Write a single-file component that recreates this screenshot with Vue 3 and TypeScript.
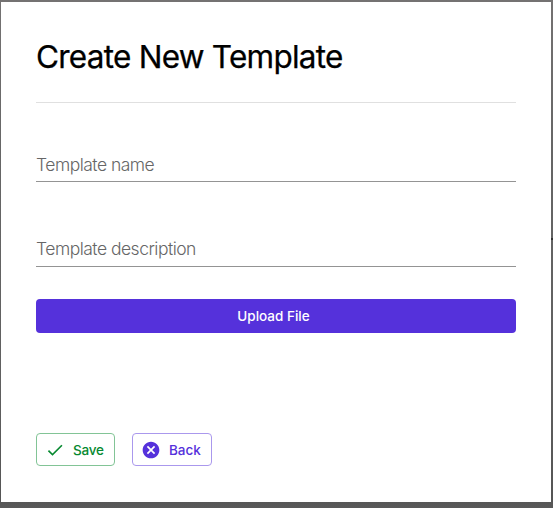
<script setup lang="ts">
import { ref } from 'vue'

const templateName = ref('')
const templateDescription = ref('')
</script>

<template>
  <div class="backdrop">
    <form class="dialog" @submit.prevent>
      <h1 class="title">Create New Template</h1>
      <input v-model="templateName" class="field name" type="text" placeholder="Template name" />
      <input
        v-model="templateDescription"
        class="field description"
        type="text"
        placeholder="Template description"
      />
      <button class="upload" type="button">Upload File</button>
      <div class="actions">
        <button class="action save" type="submit">
          <svg class="icon" viewBox="0 0 24 24" aria-hidden="true">
            <path d="M9 16.17 4.83 12l-1.42 1.41L9 19 21 7l-1.41-1.41z" />
          </svg>
          <span>Save</span>
        </button>
        <button class="action back" type="button">
          <svg class="icon" viewBox="0 0 24 24" aria-hidden="true">
            <path
              d="M12 2C6.47 2 2 6.47 2 12s4.47 10 10 10 10-4.47 10-10S17.53 2 12 2zm5 13.59L15.59 17 12 13.41 8.41 17 7 15.59 10.59 12 7 8.41 8.41 7 12 10.59 15.59 7 17 8.41 13.41 12 17 15.59z"
            />
          </svg>
          <span>Back</span>
        </button>
      </div>
    </form>
  </div>
</template>

<style>
body {
  margin: 0;
}
</style>

<style scoped>
.backdrop {
  box-sizing: border-box;
  width: 553px;
  height: 508px;
  padding: 2px 2px 6px 1px;
  overflow: hidden;
  background:
    linear-gradient(#333, #333) right 238px / 2px 2px no-repeat,
    linear-gradient(#747272 0, #666 150px, #606060 380px, #555 500px, #595959 508px);
  font-family: Inter, "Liberation Sans", sans-serif;
}

.dialog {
  box-sizing: border-box;
  display: flex;
  flex-direction: column;
  width: 550px;
  height: 500px;
  padding: 32px 35px 36px;
  background: #fff;
}

.title {
  box-sizing: border-box;
  height: 69px;
  margin: 0;
  border-bottom: 1px solid #e0e0e0;
  color: #000;
  font-size: 31.5px;
  font-weight: 400;
  line-height: 46px;
  letter-spacing: -0.75px;
  white-space: nowrap;
  -webkit-text-stroke: 0.25px #000;
}

.field {
  box-sizing: border-box;
  width: 100%;
  height: 34px;
  padding: 0 0 1px;
  border: 0;
  border-bottom: 1px solid #949494;
  border-radius: 0;
  outline: 0;
  background: transparent;
  color: #222;
  font-family: inherit;
  font-size: 17.5px;
  font-weight: 300;
  letter-spacing: -0.51px;
}

.field::placeholder {
  color: #666;
  opacity: 1;
}

.name {
  margin-top: 45px;
}

.description {
  margin-top: 51px;
  padding-bottom: 3px;
}

.upload {
  height: 34px;
  margin-top: 32px;
  padding: 0 5px 0 0;
  border: 0;
  border-radius: 4px;
  background: #5531db;
  color: #fff;
  font-family: inherit;
  font-size: 13.5px;
  font-weight: 500;
}

.actions {
  display: flex;
  gap: 17px;
  margin-top: auto;
}

.action {
  box-sizing: border-box;
  display: flex;
  align-items: center;
  height: 33px;
  padding: 0 0 0 8px;
  border: 1px solid;
  border-radius: 4px;
  background: #fff;
  font-family: inherit;
  font-size: 13.5px;
  font-weight: 500;
  white-space: nowrap;
}

.icon {
  width: 20px;
  height: 20px;
  margin-right: 8px;
  fill: currentColor;
}

.save {
  width: 79px;
  border-color: #82c496;
  color: #078930;
  letter-spacing: -0.2px;
}

.back {
  width: 80px;
  border-color: #aa98ed;
  color: #5531db;
}
</style>
